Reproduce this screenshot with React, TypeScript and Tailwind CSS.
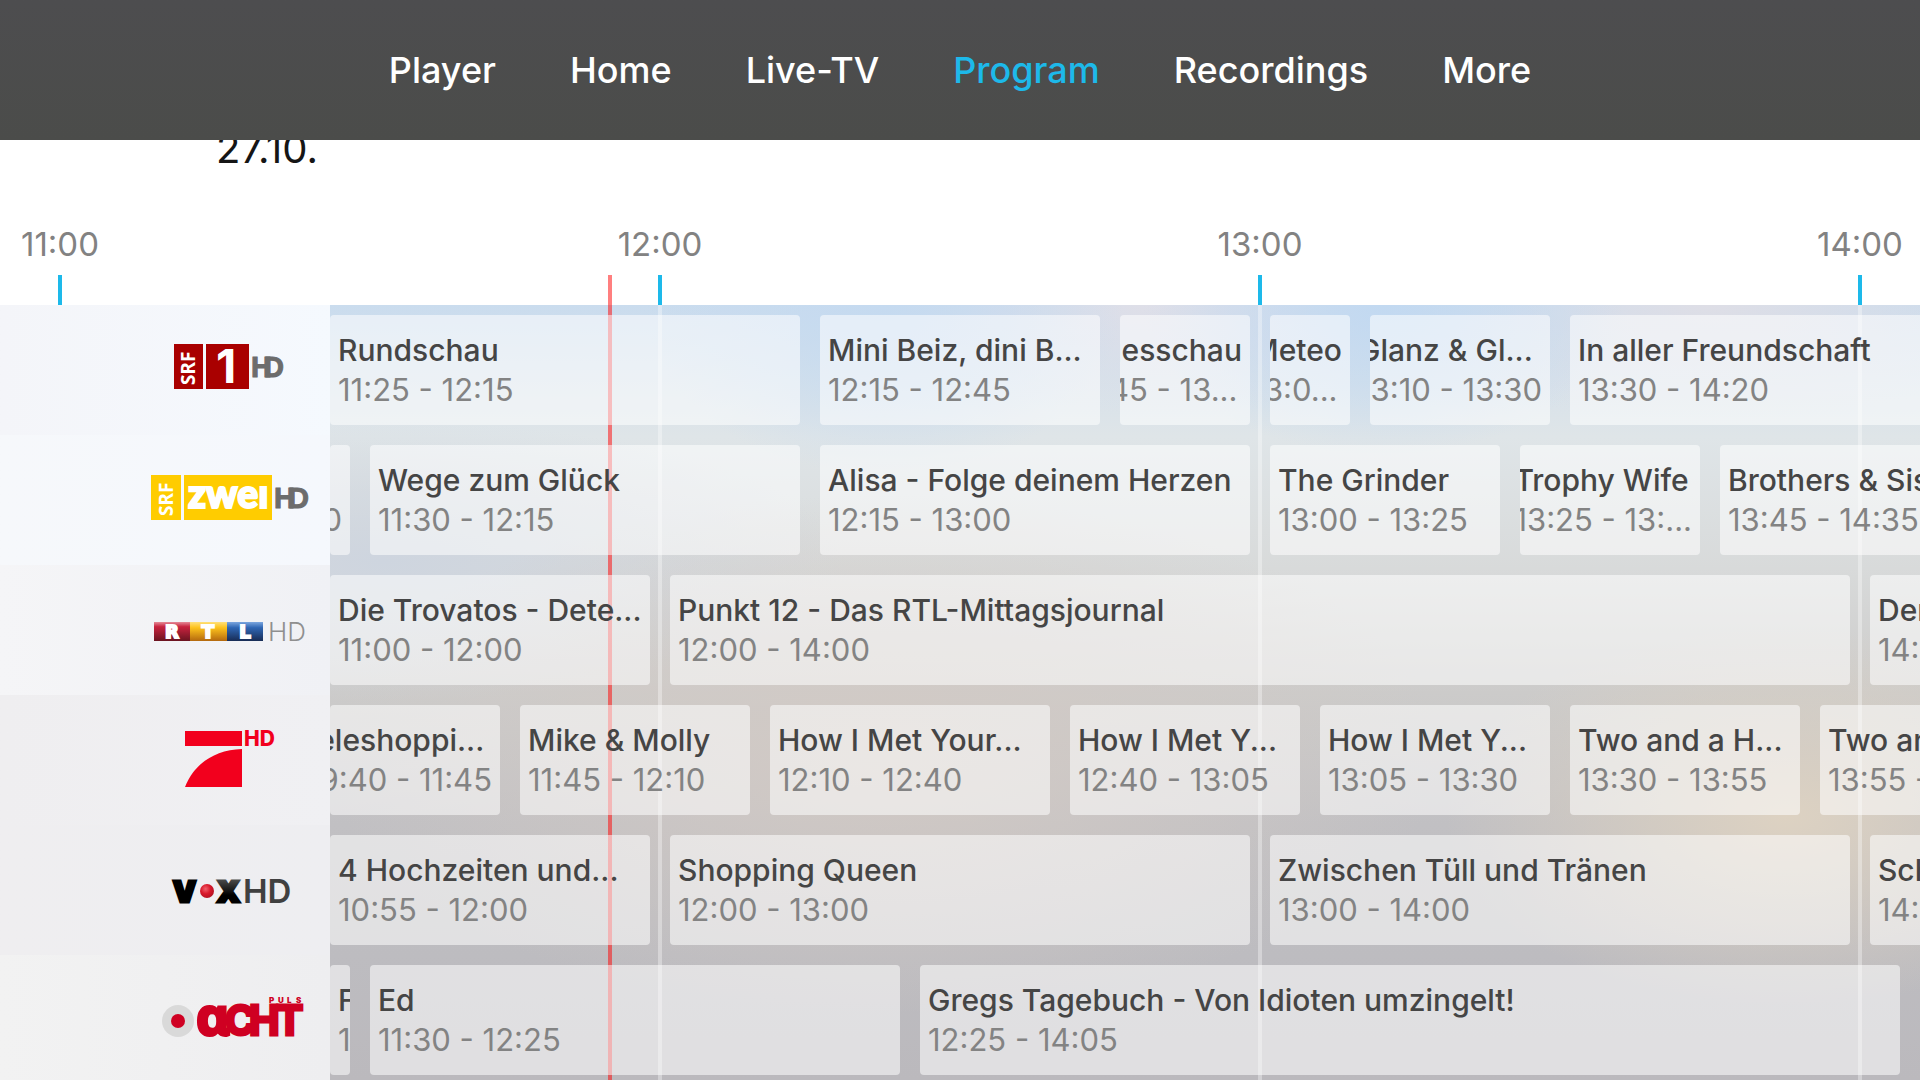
import React from "react";

const HOUR = 60;
/** Minutes since midnight at the left edge of the screen and of the programme grid. */
const SCREEN_START = 10 * HOUR + 54;
const SCREEN_MINUTES = 192;
const GRID_START = 11 * HOUR + 27;
const GRID_MINUTES = 159;
const NOW = 11 * HOUR + 55;

const screenPercent = (minute: number) =>
  `${((minute - SCREEN_START) / SCREEN_MINUTES) * 100}%`;

type Programme = {
  title: string;
  time: string;
  start: number;
  end: number;
  /** Text that is too long for its card is pushed against the right edge. */
  alignEnd?: boolean;
};

type Channel = {
  name: string;
  logo: React.ReactNode;
  tint: string;
  programmes: Programme[];
};

const at = (h: number, m: number) => h * HOUR + m;

function Logo({ label, children }: { label: string; children: React.ReactNode }) {
  return (
    <svg role="img" aria-label={label} viewBox="0 0 160 60" className="h-[60px] w-[160px]">
      {children}
    </svg>
  );
}

const srf1 = (
  <Logo label="SRF 1 HD">
    <rect x="24" y="4" width="29" height="45" fill="#a90000" />
    <rect x="56" y="4" width="43" height="45" fill="#a90000" />
    <text
      transform="translate(45 45) rotate(-90)"
      fontSize="19"
      fontWeight="700"
      fill="#fff"
      className="font-['Noto_Sans',sans-serif]"
    >
      SRF
    </text>
    <text x="66" y="43" fontSize="47" fontWeight="700" fill="#fff" className="font-['Inter',sans-serif]">
      1
    </text>
    <text
      y="37"
      fontSize="29"
      fontWeight="700"
      fill="#6c6c6c"
      stroke="#6c6c6c"
      className="font-['Liberation_Sans_Narrow','Liberation_Sans',sans-serif]"
    >
      <tspan x="101">H</tspan>
      <tspan x="113">D</tspan>
    </text>
  </Logo>
);

const srfZwei = (
  <Logo label="SRF zwei HD">
    <rect x="1" y="5" width="30" height="45" fill="#ffcc00" />
    <rect x="34" y="5" width="88" height="45" fill="#ffcc00" />
    <text
      transform="translate(23 46) rotate(-90)"
      fontSize="19"
      fontWeight="700"
      fill="#fff"
      className="font-['Noto_Sans',sans-serif]"
    >
      SRF
    </text>
    <text
      x="38"
      y="38"
      fontSize="39"
      fontWeight="900"
      fill="#fff"
      stroke="#fff"
      strokeWidth="2"
      className="font-['Lato',sans-serif]"
    >
      zweı
    </text>
    <text
      y="38"
      fontSize="29"
      fontWeight="700"
      fill="#6c6c6c"
      stroke="#6c6c6c"
      className="font-['Liberation_Sans_Narrow','Liberation_Sans',sans-serif]"
    >
      <tspan x="124">H</tspan>
      <tspan x="138">D</tspan>
    </text>
  </Logo>
);

const rtl = (
  <Logo label="RTL HD">
    <defs>
      <linearGradient id="rtl-red" x1="0" y1="0" x2="0" y2="1">
        <stop offset="0" stopColor="#e58a97" />
        <stop offset="0.25" stopColor="#c8233f" />
        <stop offset="1" stopColor="#6a1420" />
      </linearGradient>
      <linearGradient id="rtl-yellow" x1="0" y1="0" x2="0" y2="1">
        <stop offset="0" stopColor="#ffe07a" />
        <stop offset="0.3" stopColor="#fdc21c" />
        <stop offset="1" stopColor="#b4690f" />
      </linearGradient>
      <linearGradient id="rtl-blue" x1="0" y1="0" x2="0" y2="1">
        <stop offset="0" stopColor="#7ba6df" />
        <stop offset="0.3" stopColor="#2f66b3" />
        <stop offset="1" stopColor="#182c55" />
      </linearGradient>
    </defs>
    <rect x="4" y="22" width="36" height="19" fill="url(#rtl-red)" />
    <rect x="40" y="22" width="37" height="19" fill="url(#rtl-yellow)" />
    <rect x="77" y="22" width="36" height="19" fill="url(#rtl-blue)" />
    <g
      fontSize="18"
      fontWeight="700"
      fill="#fff"
      stroke="#fff"
      strokeWidth="2"
      textAnchor="middle"
      className="font-['DejaVu_Sans',sans-serif]"
    >
      <text x="22" y="38">R</text>
      <text x="58" y="38">T</text>
      <text x="95" y="38">L</text>
    </g>
    <text x="118" y="41" fontSize="26" fontWeight="300" fill="#8f8f8f" className="font-['Inter',sans-serif]">
      HD
    </text>
  </Logo>
);

const pro7 = (
  <Logo label="ProSieben HD">
    <rect x="35" y="1" width="57" height="15" fill="#f2001d" />
    <path d="M35 57 H92 V19 C64 20 44 34 35 57 Z" fill="#f2001d" />
    <text x="94" y="16" fontSize="21" fontWeight="800" fill="#f2001d" className="font-['Inter',sans-serif]">
      HD
    </text>
  </Logo>
);

const vox = (
  <Logo label="VOX HD">
    <defs>
      <linearGradient id="vox-x" x1="0" y1="0" x2="0" y2="1">
        <stop offset="0" stopColor="#666" />
        <stop offset="0.6" stopColor="#000" />
      </linearGradient>
      <radialGradient id="vox-ball" cx="0.4" cy="0.35" r="0.7">
        <stop offset="0" stopColor="#f0606c" />
        <stop offset="0.5" stopColor="#d9182b" />
        <stop offset="1" stopColor="#b01020" />
      </radialGradient>
    </defs>
    <g fontSize="29" fontWeight="900" strokeWidth="3" className="font-['Inter',sans-serif]">
      <text x="23" y="42" fill="#000" stroke="#000">V</text>
      <text x="67" y="42" fill="url(#vox-x)" stroke="url(#vox-x)">X</text>
    </g>
    <circle cx="57" cy="31" r="12" fill="#efeef1" />
    <circle cx="57" cy="31" r="7" fill="url(#vox-ball)" />
    <text x="93" y="43" fontSize="33" fontWeight="600" fill="#404040" className="font-['Inter',sans-serif]">
      HD
    </text>
  </Logo>
);

const puls8 = (
  <Logo label="Puls Acht">
    <circle cx="28" cy="31" r="16" fill="#d9d9d9" />
    <circle cx="28" cy="31" r="7" fill="#cf0022" />
    <text y="13" fontSize="8" fontWeight="900" fill="#cf0022" className="font-['Inter',sans-serif]">
      <tspan x="119">P</tspan>
      <tspan x="128">U</tspan>
      <tspan x="137">L</tspan>
      <tspan x="146">S</tspan>
    </text>
    <g
      fill="#cf0022"
      stroke="#cf0022"
      strokeWidth="3"
      fontSize="41"
      fontWeight="700"
      className="font-['Inter',sans-serif]"
    >
      <text x="46" y="45" fontSize="52" className="font-['Noto_Sans',sans-serif]">ɑ</text>
      <text x="75" y="45">C</text>
      <text x="99" y="45">H</text>
      <text x="126" y="45">T</text>
    </g>
  </Logo>
);

const channels: Channel[] = [
  {
    name: "SRF 1 HD",
    logo: srf1,
    tint: "bg-linear-to-r from-[#f4f5f9] to-[#f5f9fe]",
    programmes: [
      { title: "Rundschau", time: "11:25 - 12:15", start: at(11, 25), end: at(12, 15) },
      { title: "Mini Beiz, dini B...", time: "12:15 - 12:45", start: at(12, 15), end: at(12, 45) },
      { title: "Tagesschau", time: "12:45 - 13...", start: at(12, 45), end: at(13, 0), alignEnd: true },
      { title: "Meteo", time: "13:0...", start: at(13, 0), end: at(13, 10), alignEnd: true },
      { title: "Glanz & Gl...", time: "13:10 - 13:30", start: at(13, 10), end: at(13, 30), alignEnd: true },
      { title: "In aller Freundschaft", time: "13:30 - 14:20", start: at(13, 30), end: at(14, 20) },
    ],
  },
  {
    name: "SRF zwei HD",
    logo: srfZwei,
    tint: "bg-linear-to-r from-[#f6f8fb] to-[#f5f8fd]",
    programmes: [
      { title: "", time: "11:00 - 11:30", start: at(11, 0), end: at(11, 30), alignEnd: true },
      { title: "Wege zum Glück", time: "11:30 - 12:15", start: at(11, 30), end: at(12, 15) },
      { title: "Alisa - Folge deinem Herzen", time: "12:15 - 13:00", start: at(12, 15), end: at(13, 0) },
      { title: "The Grinder", time: "13:00 - 13:25", start: at(13, 0), end: at(13, 25) },
      { title: "Trophy Wife", time: "13:25 - 13:...", start: at(13, 25), end: at(13, 45), alignEnd: true },
      { title: "Brothers & Sisters", time: "13:45 - 14:35", start: at(13, 45), end: at(14, 35) },
    ],
  },
  {
    name: "RTL HD",
    logo: rtl,
    tint: "bg-linear-to-r from-[#f5f5f7] to-[#f0f1f5]",
    programmes: [
      { title: "Die Trovatos - Dete...", time: "11:00 - 12:00", start: at(11, 0), end: at(12, 0) },
      { title: "Punkt 12 - Das RTL-Mittagsjournal", time: "12:00 - 14:00", start: at(12, 0), end: at(14, 0) },
      { title: "Der Blaulicht-Report", time: "14:00 - 15:00", start: at(14, 0), end: at(15, 0) },
    ],
  },
  {
    name: "ProSieben HD",
    logo: pro7,
    tint: "bg-linear-to-r from-[#efeef0] to-[#f0f0f3]",
    programmes: [
      { title: "Teleshoppi...", time: "09:40 - 11:45", start: at(9, 40), end: at(11, 45), alignEnd: true },
      { title: "Mike & Molly", time: "11:45 - 12:10", start: at(11, 45), end: at(12, 10) },
      { title: "How I Met Your...", time: "12:10 - 12:40", start: at(12, 10), end: at(12, 40) },
      { title: "How I Met Y...", time: "12:40 - 13:05", start: at(12, 40), end: at(13, 5) },
      { title: "How I Met Y...", time: "13:05 - 13:30", start: at(13, 5), end: at(13, 30) },
      { title: "Two and a H...", time: "13:30 - 13:55", start: at(13, 30), end: at(13, 55) },
      { title: "Two and a Half Men", time: "13:55 - 14:20", start: at(13, 55), end: at(14, 20) },
    ],
  },
  {
    name: "VOX HD",
    logo: vox,
    tint: "bg-linear-to-r from-[#efeef0] to-[#eeeef1]",
    programmes: [
      { title: "4 Hochzeiten und...", time: "10:55 - 12:00", start: at(10, 55), end: at(12, 0) },
      { title: "Shopping Queen", time: "12:00 - 13:00", start: at(12, 0), end: at(13, 0) },
      { title: "Zwischen Tüll und Tränen", time: "13:00 - 14:00", start: at(13, 0), end: at(14, 0) },
      { title: "Schrankalarm", time: "14:00 - 15:00", start: at(14, 0), end: at(15, 0) },
    ],
  },
  {
    name: "Puls 8",
    logo: puls8,
    tint: "bg-linear-to-r from-[#f2f2f2] to-[#eeeef0]",
    programmes: [
      { title: "Frasier", time: "11:05 - 11:30", start: at(11, 5), end: at(11, 30) },
      { title: "Ed", time: "11:30 - 12:25", start: at(11, 30), end: at(12, 25) },
      { title: "Gregs Tagebuch - Von Idioten umzingelt!", time: "12:25 - 14:05", start: at(12, 25), end: at(14, 5) },
    ],
  },
];

const navItems = ["Player", "Home", "Live-TV", "Program", "Recordings", "More"];
const rulerHours = [11, 12, 13, 14];

function ProgrammeCard({ programme }: { programme: Programme }) {
  const cutOff = programme.start < GRID_START;
  const minutes = programme.end - Math.max(programme.start, GRID_START);
  return (
    <li
      className={`shrink-0 py-[10px] pr-[10px] ${cutOff ? "" : "pl-[10px]"}`}
      style={{ width: `${(minutes / GRID_MINUTES) * 100}%` }}
    >
      <button
        type="button"
        className={`flex h-[110px] w-full cursor-pointer items-start overflow-hidden rounded-sm bg-white/54 px-2 pt-4 text-left whitespace-nowrap ${
          programme.alignEnd ? "justify-end" : "justify-start"
        }`}
      >
        <span className="flex flex-col leading-[39px]">
          <span className="min-h-[39px] text-[30px] font-medium text-[#454545]">{programme.title}</span>
          <span className="text-[31px] text-[#838383]">{programme.time}</span>
        </span>
      </button>
    </li>
  );
}

export default function App() {
  return (
    <div className="flex h-screen flex-col overflow-hidden bg-white font-['Inter',sans-serif]">
      <header className="relative z-10 flex h-[140px] shrink-0 items-center justify-center bg-linear-to-b from-[#4d4d4f] to-[#4b4c4a]">
        <nav aria-label="Main" className="flex gap-[74px] text-[36px] leading-none font-medium">
          {navItems.map((item) => (
            <a
              key={item}
              href="#"
              aria-current={item === "Program" ? "page" : undefined}
              className={item === "Program" ? "text-[#1db9ea]" : "text-white"}
            >
              {item}
            </a>
          ))}
        </nav>
      </header>

      <div className="-mt-[16px] h-[102px] shrink-0 pl-[11.25%] text-[40px] leading-[50px] text-[#151515]">
        <time dateTime="10-27">27.10.</time>
      </div>

      <div className="relative h-[79px] shrink-0 overflow-hidden">
        <ol className="-ml-[12.5%] flex w-full">
          {rulerHours.map((hour) => (
            <li
              key={hour}
              className="flex h-[79px] w-[31.25%] shrink-0 flex-col items-center justify-between text-[33px] leading-[36px] text-[#828282]"
            >
              <span>{hour}:00</span>
              <span className="h-[30px] w-1 bg-[#1db9ea]" />
            </li>
          ))}
        </ol>
        <span
          className="absolute bottom-0 h-[30px] w-1 -translate-x-1/2 bg-[#ff0000]/50"
          style={{ left: screenPercent(NOW) }}
        />
      </div>

      <main className="relative min-h-0 flex-1 overflow-hidden bg-[radial-gradient(ellipse_240px_170px_at_46%_0%,#c5daf0_0%,#c5daf000_100%),radial-gradient(ellipse_240px_150px_at_72%_0%,#c2d9f1_0%,#c2d9f100_100%),radial-gradient(ellipse_300px_110px_at_60%_0%,#dfdfe8_0%,#dfdfe800_100%),radial-gradient(ellipse_320px_120px_at_89%_0%,#dedee6_0%,#dedee600_100%),radial-gradient(ellipse_340px_190px_at_93%_66%,#ddd2c2_0%,#ddd2c200_100%),radial-gradient(ellipse_560px_260px_at_46%_58%,#d2cac5_0%,#d2cac500_100%),radial-gradient(ellipse_460px_140px_at_20%_33%,#ced5df_0%,#ced5df00_100%),linear-gradient(to_bottom,#cadcee_0%,#dfe5e8_17%,#d8dada_34%,#cccbca_50%,#c1c0c3_67%,#bdbcc0_84%,#bbb9bd_100%)]">
        {rulerHours.slice(1).map((hour) => (
          <span
            key={hour}
            className="absolute inset-y-0 w-1 -translate-x-1/2 bg-white/35"
            style={{ left: screenPercent(hour * HOUR) }}
          />
        ))}
        <span
          className="absolute inset-y-0 w-1 -translate-x-1/2 bg-[#ff0000]/50"
          style={{ left: screenPercent(NOW) }}
        />
        <div className="relative flex flex-col">
          {channels.map((channel) => (
            <section key={channel.name} aria-label={channel.name} className="flex h-[130px]">
              <div
                className={`flex w-[17.1875%] shrink-0 items-center justify-end pr-5 ${channel.tint}`}
              >
                {channel.logo}
              </div>
              <ul className="flex min-w-0 flex-1 overflow-hidden">
                {channel.programmes.map((programme) => (
                  <ProgrammeCard key={programme.start} programme={programme} />
                ))}
              </ul>
            </section>
          ))}
        </div>
      </main>
    </div>
  );
}
